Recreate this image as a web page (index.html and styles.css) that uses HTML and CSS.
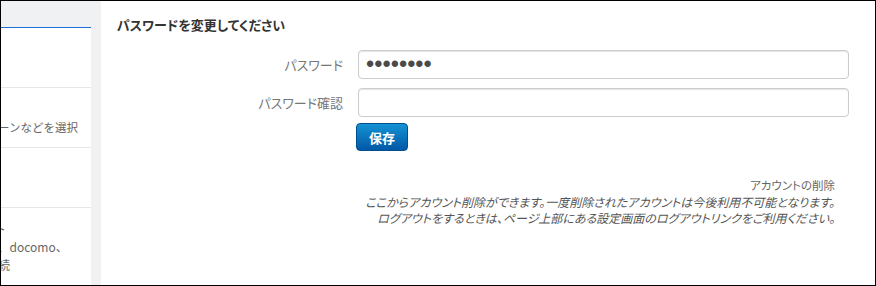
FILE: index.html
```html
<!DOCTYPE html>
<html lang="ja">
<head>
<meta charset="utf-8">
<title>パスワード変更</title>
<link rel="stylesheet" href="styles.css">
</head>
<body>
<div class="frame">
  <aside class="sidebar">
    <div class="side-top"></div>
    <div class="side-item"></div>
    <div class="side-item">
      <div class="side-inner">
        <div class="side-line"></div>
        <div class="side-line side-theme">デザインパターンなどを選択</div>
      </div>
    </div>
    <div class="side-item"></div>
    <div class="side-item last">
      <div class="side-inner">
        <div class="side-line side-title">外部アカウント</div>
        <div class="side-line">ソフトバンク、docomo、</div>
        <div class="side-line">ログインを継続</div>
      </div>
    </div>
  </aside>
  <main class="main">
    <h1 class="heading">パスワードを変更してください</h1>
    <form class="form">
      <div class="row">
        <label class="label" for="pw">パスワード</label>
        <input class="input" id="pw" type="password" value="abcdefgh">
      </div>
      <div class="row row-gap">
        <label class="label" for="pw2">パスワード確認</label>
        <input class="input" id="pw2" type="password">
      </div>
      <div class="row row-btn">
        <span class="label"></span>
        <button class="btn" type="button">保存</button>
      </div>
    </form>
    <div class="delete">
      <div class="delete-title">アカウントの削除</div>
      <div class="delete-note">ここからアカウント削除ができます。一度削除されたアカウントは今後利用不可能となります。</div>
      <div class="delete-note">ログアウトをするときは、ページ上部にある設定画面のログアウトリンクをご利用ください。</div>
    </div>
  </main>
</div>
</body>
</html>
```

FILE: styles.css
```css
* { box-sizing: border-box; }
html, body { margin: 0; padding: 0; background: #fff; }
body {
  font-family: "Noto Sans CJK JP", "Noto Sans", sans-serif;
  font-feature-settings: "palt";
}
.frame {
  width: 876px;
  height: 286px;
  border: 1px solid #000;
  display: flex;
  overflow: hidden;
}
.sidebar {
  width: 100px;
  flex: 0 0 100px;
  background: #f0f1f3;
  padding-right: 10px;
  display: flex;
  flex-direction: column;
}
.side-top {
  height: 27px;
  border-bottom: 1px solid #1a6fd6;
}
.side-item {
  height: 60px;
  background: #fff;
  border-bottom: 1px solid #e6e6e6;
  overflow: hidden;
  padding-top: 12px;
}
.side-item.last {
  flex: 1;
  border-bottom: none;
}
.side-inner {
  margin-left: -75px;
  white-space: nowrap;
  font-size: 12px;
  line-height: 18px;
  color: #666;
  font-feature-settings: normal;
}
.side-line { height: 18px; }
.side-theme {
  font-size: 11.5px;
  margin-left: 3px;
}
.side-title { margin-left: -4px; }
.main {
  flex: 1;
  padding: 14px 0 0 16px;
}
.heading {
  margin: 0;
  font-size: 13px;
  line-height: 20px;
  font-weight: bold;
  color: #333;
}
.form {
  margin-top: 15px;
}
.row {
  display: flex;
  align-items: center;
  gap: 15px;
}
.row-gap { margin-top: 9px; }
.row-btn { margin-top: 6px; }
.label {
  width: 226px;
  text-align: right;
  font-size: 13px;
  color: #777;
}
.input {
  width: 491px;
  height: 29px;
  border: 1px solid #ccc;
  border-radius: 4px;
  box-shadow: inset 0 1px 1px rgba(0,0,0,0.1);
  padding: 0 7px;
  font-size: 23.5px;
  color: #4a4a4a;
  font-family: "Liberation Sans", sans-serif;
  outline: none;
}
.btn {
  margin-left: -2px;
  width: 52px;
  height: 28px;
  border: 1px solid #00508f;
  border-radius: 4px;
  background: linear-gradient(#1592d4, #0058a6);
  color: #fff;
  font-family: "Noto Sans CJK JP", sans-serif;
  font-size: 13px;
  font-weight: bold;
  padding: 0;
  cursor: pointer;
}
.delete {
  margin-top: 26px;
  padding-right: 40px;
  text-align: right;
  font-size: 11.5px;
  line-height: 16.5px;
  color: #555;
}
.delete-title { color: #666; }
.delete-note { font-style: italic; font-size: 12px; }
```
